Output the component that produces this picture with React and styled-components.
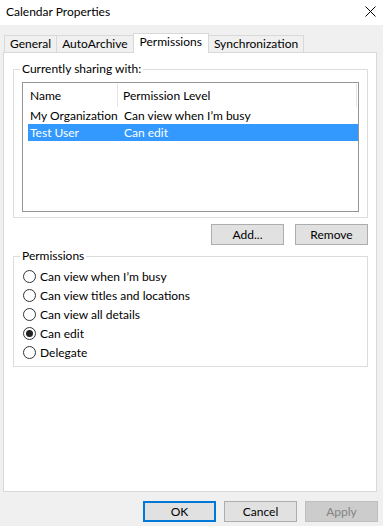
import React, { useState } from 'react';
import styled, { createGlobalStyle } from 'styled-components';

const GlobalStyle = createGlobalStyle`
    html, body {
        margin: 0;
        padding: 0;
        background: #f0f0f0;
    }
    body {
        font-family: Lato, "Noto Sans", sans-serif;
        font-size: 12px;
        color: #000;
    }
`;

const TABS = ['General', 'AutoArchive', 'Permissions', 'Synchronization'];

const SHARES = [
    { name: 'My Organization', level: 'Can view when I\u2019m busy' },
    { name: 'Test User', level: 'Can edit' },
];

const LEVELS = [
    'Can view when I\u2019m busy',
    'Can view titles and locations',
    'Can view all details',
    'Can edit',
    'Delegate',
];

export default function App() {
    const [selectedRow, setSelectedRow] = useState(1);
    const [level, setLevel] = useState(3);

    return (
        <>
            <GlobalStyle />
            <WindowStyled>
                <TitleBarStyled>
                    <TitleStyled>Calendar Properties</TitleStyled>
                    <CloseStyled aria-label="Close">
                        <svg width="11" height="11" viewBox="0 0 11 11">
                            <path d="M0.5 0.5 L10.5 10.5 M10.5 0.5 L0.5 10.5" stroke="#000" strokeWidth="1" />
                        </svg>
                    </CloseStyled>
                </TitleBarStyled>

                <TabStripStyled>
                    {TABS.map((tab) => (
                        <TabStyled key={tab} $active={tab === 'Permissions'}>
                            {tab}
                        </TabStyled>
                    ))}
                </TabStripStyled>

                <PanelStyled>
                    <GroupStyled>
                        <LegendStyled>Currently sharing with:</LegendStyled>
                        <ListBoxStyled>
                            <ListHeaderStyled>
                                <HeaderCellStyled $first>Name</HeaderCellStyled>
                                <HeaderCellStyled>Permission Level</HeaderCellStyled>
                            </ListHeaderStyled>
                            {SHARES.map((share, i) => (
                                <ListRowStyled
                                    key={share.name}
                                    $selected={i === selectedRow}
                                    onClick={() => setSelectedRow(i)}
                                >
                                    <NameCellStyled>{share.name}</NameCellStyled>
                                    <LevelCellStyled>{share.level}</LevelCellStyled>
                                </ListRowStyled>
                            ))}
                        </ListBoxStyled>
                    </GroupStyled>

                    <ListButtonsStyled>
                        <ButtonStyled>Add...</ButtonStyled>
                        <ButtonStyled>Remove</ButtonStyled>
                    </ListButtonsStyled>

                    <GroupStyled $radios>
                        <LegendStyled>Permissions</LegendStyled>
                        {LEVELS.map((label, i) => (
                            <RadioRowStyled key={label} onClick={() => setLevel(i)}>
                                <RadioCircleStyled $checked={i === level} />
                                {label}
                            </RadioRowStyled>
                        ))}
                    </GroupStyled>
                </PanelStyled>

                <FooterStyled>
                    <ButtonStyled $default>OK</ButtonStyled>
                    <ButtonStyled>Cancel</ButtonStyled>
                    <ButtonStyled disabled>Apply</ButtonStyled>
                </FooterStyled>
            </WindowStyled>
        </>
    );
}

const WindowStyled = styled.div`
    width: 383px;
    height: 526px;
    display: flex;
    flex-direction: column;
    background: #f0f0f0;
    overflow: hidden;
`;

const TitleBarStyled = styled.div`
    height: 25px;
    background: #fff;
    display: flex;
    align-items: center;
    justify-content: space-between;
    padding: 0 7px 2px 6px;
    box-sizing: border-box;
`;

const TitleStyled = styled.div`
    font-size: 12px;
`;

const CloseStyled = styled.div`
    display: flex;
    width: 11px;
    height: 11px;
`;

const TabStripStyled = styled.div`
    display: flex;
    align-items: flex-end;
    height: 27px;
    padding-left: 5px;
    position: relative;
    z-index: 1;
`;

const TabStyled = styled.div`
    box-sizing: border-box;
    height: ${(p) => (p.$active ? '20px' : '17px')};
    margin-bottom: ${(p) => (p.$active ? '-1px' : '0')};
    padding: ${(p) => (p.$active ? '0 6px 3px' : '0 5px')};
    line-height: 16px;
    background: ${(p) => (p.$active ? '#fff' : '#f0f0f0')};
    border: 1px solid #d9d9d9;
    border-bottom: ${(p) => (p.$active ? 'none' : '0')};
    margin-left: -1px;
    white-space: nowrap;
`;

const PanelStyled = styled.div`
    box-sizing: border-box;
    height: 440px;
    margin: 0 6px 0 3px;
    background: #fff;
    border: 1px solid #d9d9d9;
    padding: 8px 8px 0 9px;
    display: flex;
    flex-direction: column;
`;

const GroupStyled = styled.fieldset`
    margin: 0;
    border: 1px solid #dcdcdc;
    padding: ${(p) => (p.$radios ? '3px 0 4px 8px' : '5px 8px 5px 8px')};
    min-width: 0;
`;

const LegendStyled = styled.legend`
    padding: 0 2px;
    margin-left: -2px;
    line-height: 16px;
`;

const ListBoxStyled = styled.div`
    height: 130px;
    box-sizing: border-box;
    border: 1px solid #959595;
    padding: 1px 0 0 5px;
`;

const ListHeaderStyled = styled.div`
    display: flex;
    height: 23px;
    align-items: center;
    border-right: 1px solid #e5e5e5;
    margin-right: 1px;
`;

const HeaderCellStyled = styled.div`
    box-sizing: border-box;
    height: 100%;
    display: flex;
    align-items: center;
    ${(p) => (p.$first ? 'width: 90px; padding-left: 2px; border-right: 1px solid #e5e5e5;' : 'flex: 1; padding-left: 5px;')}
`;

const ListRowStyled = styled.div`
    display: flex;
    height: 17px;
    align-items: center;
    background: ${(p) => (p.$selected ? '#3399ff' : 'transparent')};
    color: ${(p) => (p.$selected ? '#fff' : '#000')};
    white-space: nowrap;
`;

const NameCellStyled = styled.div`
    width: 90px;
    padding-left: 2px;
    box-sizing: border-box;
    overflow: hidden;
`;

const LevelCellStyled = styled.div`
    flex: 1;
    padding-left: 6px;
`;

const ListButtonsStyled = styled.div`
    display: flex;
    justify-content: flex-end;
    gap: 11px;
    margin: 6px 0 3px;
`;

const ButtonStyled = styled.button`
    box-sizing: border-box;
    width: 73px;
    height: 21px;
    padding: 0 0 1px;
    font-family: inherit;
    font-size: 12px;
    color: #000;
    background: #e1e1e1;
    border: 1px solid #adadad;
    border-radius: 0;
    ${(p) => p.$default && 'border: 2px solid #0078d7;'}

    &:disabled {
        background: #cccccc;
        border-color: #bfbfbf;
        color: #838383;
    }
`;

const RadioRowStyled = styled.label`
    display: flex;
    align-items: center;
    height: 19px;
    gap: 4px;
    cursor: default;
`;

const RadioCircleStyled = styled.span`
    box-sizing: border-box;
    width: 13px;
    height: 13px;
    border-radius: 50%;
    border: 1px solid #333;
    background: #fff;
    display: flex;
    align-items: center;
    justify-content: center;
    margin-left: 1px;

    &::after {
        content: '';
        width: 7px;
        height: 7px;
        border-radius: 50%;
        background: #222;
        display: ${(p) => (p.$checked ? 'block' : 'none')};
    }
`;

const FooterStyled = styled.div`
    display: flex;
    justify-content: flex-end;
    gap: 8px;
    padding: 9px 5px 0 0;
`;
